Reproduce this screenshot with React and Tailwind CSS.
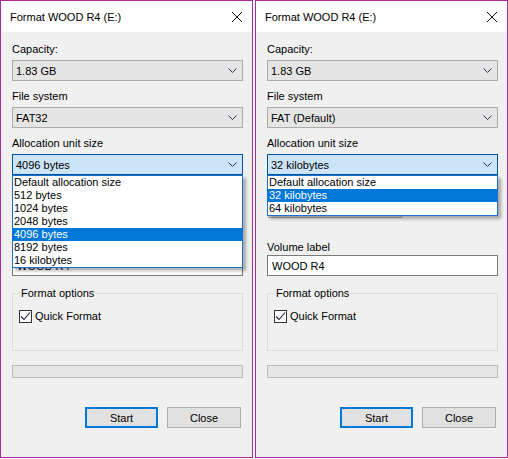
import React from 'react';

const font = { fontFamily: '"Liberation Sans", Arial, sans-serif' };

const Chevron = () => (
  <svg width="9" height="5" viewBox="0 0 9 5" className="shrink-0">
    <path d="M0.5 0.5 L4.5 4.5 L8.5 0.5" fill="none" stroke="#2b3350" strokeWidth="1" />
  </svg>
);

const Select = ({ value, focused }) => (
  <div
    className={
      focused
        ? 'h-[21px] flex items-center justify-between pl-[3px] pr-[5px] border border-[#005499] bg-[#cce4f7]'
        : 'h-[21px] flex items-center justify-between pl-[3px] pr-[5px] border border-[#acacac] bg-[#e5e5e5]'
    }
  >
    <span className="leading-[14px]">{value}</span>
    <Chevron />
  </div>
);

const Label = ({ children, className = '' }) => (
  <div className={'h-[14px] leading-[14px] ' + className}>{children}</div>
);

// hiddenLabel: the open list covers the volume label of that dialog
const FormatWindow = ({ fs, alloc, options, hiddenLabel }) => (
  <div className="w-[253px] h-[458px] border border-[#a42aa0] flex flex-col bg-[#f0f0f0] text-[11px] text-black">
    {/* title bar */}
    <div className="h-[31px] shrink-0 bg-white flex items-center justify-between pl-[9px] pr-[10px]">
      <span className="leading-[14px]">Format WOOD R4 (E:)</span>
      <svg width="10" height="10" viewBox="0 0 10 10">
        <path d="M0 0 L10 10 M10 0 L0 10" stroke="#111" strokeWidth="1" />
      </svg>
    </div>

    <div className="flex flex-col pl-[11px] pr-[9px] pt-[10px]">
      <Label>Capacity:</Label>
      <div className="mt-[4px]">
        <Select value="1.83 GB" />
      </div>

      <Label className="mt-[8px]">File system</Label>
      <div className="mt-[4px]">
        <Select value={fs} />
      </div>

      <Label className="mt-[8px]">Allocation unit size</Label>
      <div className="mt-[4px] relative z-10">
        <Select value={alloc} focused />
        {/* open list */}
        <div className="absolute left-0 right-0 top-[21px] bg-white border border-[#1d6fd0] shadow-[3px_3px_3px_rgba(0,0,0,0.3)]">
          {options.map((o) => (
            <div
              key={o}
              className={
                o === alloc
                  ? 'h-[13px] leading-[13px] pl-[1px] bg-[#0078d7] text-white'
                  : 'h-[13px] leading-[13px] pl-[1px]'
              }
            >
              {o}
            </div>
          ))}
        </div>
      </div>

      {/* restore defaults button, under the list */}
      <div className="mt-[19px] h-[24px] w-[134px] ml-[1px] border border-[#adadad] bg-[#e1e1e1]" />

      <Label className="mt-[22px]">{hiddenLabel ? '' : 'Volume label'}</Label>
      <div className="mt-[1px] h-[21px] border border-[#7a7a7a] bg-white flex items-center pl-[4px]">
        <span className="leading-[14px]">WOOD R4</span>
      </div>

      <fieldset className="mt-[10px] h-[65px] border border-[#dcdcdc] px-[6px]">
        <legend className="ml-[1px] px-[1px] leading-[14px]">Format options</legend>
        <div className="mt-[9px] flex items-center">
          <div className="w-[13px] h-[13px] border border-[#333] bg-white flex items-center justify-center">
            <svg width="11" height="11" viewBox="0 0 11 11">
              <path d="M1 5.5 L4 8.5 L10 1.5" fill="none" stroke="#1c1c44" strokeWidth="1.1" />
            </svg>
          </div>
          <span className="ml-[3px] leading-[14px]">Quick Format</span>
        </div>
      </fieldset>

      <div className="mt-[14px] h-[13px] border border-[#bcbcbc] bg-[#e6e6e6]" />

      <div className="mt-[29px] flex justify-end gap-[9px] pr-[2px]">
        <button className="w-[73px] h-[21px] border-2 border-[#0078d7] bg-[#e1e1e1] leading-[14px]">
          Start
        </button>
        <button className="w-[74px] h-[21px] border border-[#adadad] bg-[#e1e1e1] leading-[14px]">
          Close
        </button>
      </div>
    </div>
  </div>
);

export default function App() {
  return (
    <div className="w-[508px] h-[459px] bg-white flex gap-[2px]" style={font}>
      <FormatWindow
        fs="FAT32"
        alloc="4096 bytes"
        hiddenLabel
        options={[
          'Default allocation size',
          '512 bytes',
          '1024 bytes',
          '2048 bytes',
          '4096 bytes',
          '8192 bytes',
          '16 kilobytes',
        ]}
      />
      <FormatWindow
        fs="FAT (Default)"
        alloc="32 kilobytes"
        options={['Default allocation size', '32 kilobytes', '64 kilobytes']}
      />
    </div>
  );
}
